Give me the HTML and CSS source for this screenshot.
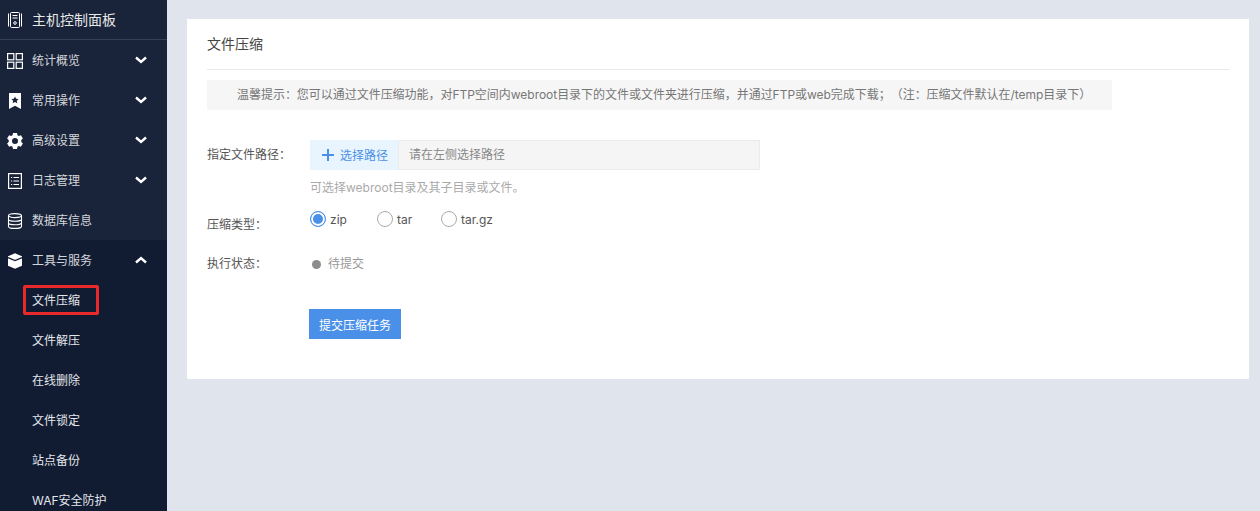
FILE: index.html
```html
<!DOCTYPE html>
<html lang="zh-CN">
<head>
<meta charset="utf-8">
<title>文件压缩</title>
<link rel="stylesheet" href="styles.css">
</head>
<body>
<div class="app">
  <aside class="sidebar">
    <div class="brand">
      <svg class="ico" viewBox="0 0 16 18" width="16" height="18" fill="none" stroke="#fff" stroke-width="1"><rect x="3.500" y="1.500" width="9" height="15" rx="1"/><path d="M1.500 2.500v13M14.500 2.500v13M5.500 4.500h5M5.500 7h5"/><circle cx="8" cy="12" r="1.300"/></svg>
      <span class="label">主机控制面板</span>
    </div>
    <nav>
      <a class="item">
        <svg class="ico" viewBox="0 0 16 16" width="16" height="16" fill="none" stroke="#fff" stroke-width="1.200"><rect x=".6" y=".6" width="6.200" height="6.200"/><rect x="9.200" y=".6" width="6.200" height="6.200"/><rect x=".6" y="9.200" width="6.200" height="6.200"/><rect x="9.200" y="9.200" width="6.200" height="6.200"/></svg>
        <span class="label">统计概览</span>
        <svg class="chev" viewBox="0 0 12 8" width="12" height="8" fill="none" stroke="#fff" stroke-width="2.400"><path d="M1 1.500l5 4.500 5-4.500"/></svg>
      </a>
      <a class="item">
        <svg class="ico" viewBox="0 0 16 16" width="16" height="16"><path fill="#fff" fill-rule="evenodd" d="M2 0h12v16l-6-3.200L2 16zM8 3.400l-1.100 2.300-2.500.3 1.800 1.700-.5 2.500L8 9l2.300 1.200-.5-2.500L11.600 6l-2.500-.3z"/></svg>
        <span class="label">常用操作</span>
        <svg class="chev" viewBox="0 0 12 8" width="12" height="8" fill="none" stroke="#fff" stroke-width="2.400"><path d="M1 1.500l5 4.500 5-4.500"/></svg>
      </a>
      <a class="item">
        <svg class="ico" viewBox="0 0 16 16" width="16" height="16"><path fill="#fff" fill-rule="evenodd" d="M6 0h4l.5 2.200 1.300.7 2.100-.7 2 3.400-1.600 1.500v1.800l1.600 1.500-2 3.400-2.100-.7-1.300.7L10 16H6l-.5-2.200-1.300-.7-2.100.7-2-3.400 1.600-1.500V7.100L.1 5.600l2-3.400 2.100.7 1.300-.7zM8 5a3 3 0 1 0 0 6 3 3 0 0 0 0-6z"/></svg>
        <span class="label">高级设置</span>
        <svg class="chev" viewBox="0 0 12 8" width="12" height="8" fill="none" stroke="#fff" stroke-width="2.400"><path d="M1 1.500l5 4.500 5-4.500"/></svg>
      </a>
      <a class="item">
        <svg class="ico" viewBox="0 0 16 16" width="16" height="16" fill="none" stroke="#fff" stroke-width="1.200"><rect x="1.600" y=".6" width="12.800" height="14.800"/><path d="M4 4.500h1.200M6.500 4.500H12M4 8h1.200M6.500 8H12M4 11.500h1.200M6.500 11.500H12" stroke-width="1"/></svg>
        <span class="label">日志管理</span>
        <svg class="chev" viewBox="0 0 12 8" width="12" height="8" fill="none" stroke="#fff" stroke-width="2.400"><path d="M1 1.500l5 4.500 5-4.500"/></svg>
      </a>
      <a class="item">
        <svg class="ico" viewBox="0 0 16 16" width="16" height="16" fill="none" stroke="#fff" stroke-width="1.100"><ellipse cx="8" cy="2.600" rx="6.500" ry="2"/><path d="M1.500 2.600v10.800c0 1.100 2.900 2 6.500 2s6.500-.9 6.500-2V2.600M1.500 6.200c0 1.100 2.900 2 6.500 2s6.500-.9 6.500-2M1.500 9.800c0 1.100 2.900 2 6.500 2s6.500-.9 6.500-2"/></svg>
        <span class="label">数据库信息</span>
      </a>
      <div class="group">
        <a class="item">
          <svg class="ico" viewBox="0 0 16 16" width="16" height="16"><path fill="#fff" d="M8 .3l7 3v9.400l-7 3-7-3V3.300z"/><path fill="none" stroke="#111c33" stroke-width="1.200" d="M1 4.600l7 3 7-3"/></svg>
          <span class="label">工具与服务</span>
          <svg class="chev" viewBox="0 0 12 8" width="12" height="8" fill="none" stroke="#fff" stroke-width="2.400"><path d="M1 6.500l5-4.500 5 4.500"/></svg>
        </a>
        <a class="sub"><span class="mark">文件压缩</span></a>
        <a class="sub"><span>文件解压</span></a>
        <a class="sub"><span>在线删除</span></a>
        <a class="sub"><span>文件锁定</span></a>
        <a class="sub"><span>站点备份</span></a>
        <a class="sub"><span>WAF安全防护</span></a>
      </div>
    </nav>
  </aside>
  <main class="main">
    <section class="card">
      <h1 class="title">文件压缩</h1>
      <p class="notice">温馨提示：您可以通过文件压缩功能，对FTP空间内webroot目录下的文件或文件夹进行压缩，并通过FTP或web完成下载；（注：压缩文件默认在/temp目录下）</p>
      <div class="row row-path">
        <div class="key">指定文件路径：</div>
        <div class="val">
          <div class="picker">
            <button class="pick" type="button">
              <svg viewBox="0 0 12 12" width="12" height="12"><path fill="#4a90e8" d="M5 0h2v5h5v2H7v5H5V7H0V5h5z"/></svg>
              <span class="pick-text">选择路径</span>
            </button>
            <div class="path">请在左侧选择路径</div>
          </div>
          <p class="hint">可选择webroot目录及其子目录或文件。</p>
        </div>
      </div>
      <div class="row row-type">
        <div class="key">压缩类型：</div>
        <div class="radios">
          <span class="radio on"><i></i>zip</span>
          <span class="radio"><i></i>tar</span>
          <span class="radio"><i></i>tar.gz</span>
        </div>
      </div>
      <div class="row row-status">
        <div class="key">执行状态：</div>
        <div class="status"><i></i>待提交</div>
      </div>
      <button class="submit" type="button">提交压缩任务</button>
    </section>
  </main>
</div>
</body>
</html>
```
FILE: styles.css
```css
* { box-sizing: border-box; }
html, body { margin: 0; height: 100%; overflow: hidden; }
body {
  font-family: Inter, "Noto Sans CJK SC", sans-serif;
  font-size: 12px;
  color: #555;
  background: #e0e4ed;
  text-spacing-trim: space-all;
}
.app { display: flex; height: 511px; overflow: hidden; }
.sidebar { width: 167px; flex: none; background: #19233a; color: #fff; overflow: hidden; }
.brand {
  height: 40px;
  display: flex;
  align-items: center;
  padding-left: 7px;
  font-size: 14px;
  color: #e8e8e8;
  border-bottom: 1px solid #343e56;
}
.ico { flex: none; margin-top: 2px; }
.brand .ico { margin-top: 0; }
.item {
  height: 40px;
  display: flex;
  align-items: center;
  padding-left: 7px;
  color: #d4d6db;
}
.label { margin-left: 9px; flex: 1; padding-bottom: 2px; }
.chev { margin-right: 20px; margin-top: -1px; }
.group { background: #111c33; }
.sub {
  height: 40px;
  display: flex;
  align-items: center;
  padding-left: 32px;
  padding-bottom: 2px;
  color: #e4e6ea;
}
.mark {
  width: 76px;
  height: 30px;
  margin: 2px 0 0 -9px;
  padding-left: 6px;
  line-height: 25px;
  border: 3px solid #ea2a2a;
  border-radius: 2px;
}
.main { flex: 1; padding: 19px 11px 0 20px; }
.card { height: 360px; background: #fff; padding: 0 20px; }
.title {
  margin: 0;
  height: 51px;
  line-height: 50px;
  font-size: 14px;
  font-weight: 400;
  color: #444;
  border-bottom: 1px solid #e8e8e8;
}
.notice {
  margin: 10px 0 0;
  width: 905px;
  height: 30px;
  line-height: 30px;
  padding-left: 30px;
  background: #f6f6f6;
  color: #777;
  letter-spacing: -0.03px;
  white-space: nowrap;
}
.row { display: flex; }
.key { width: 102px; flex: none; color: #555; }
.row-path { margin-top: 30px; }
.row-path .key { line-height: 30px; }
.picker { display: flex; width: 450px; height: 30px; margin-left: 1px; }
.pick {
  flex: none;
  width: 88px;
  height: 30px;
  border: 0;
  padding: 0 0 0 12px;
  background: #e8f4fe;
  color: #4a90e8;
  font: inherit;
  display: flex;
  align-items: center;
  gap: 6px;
}
.pick-text { padding-bottom: 2px; }
.path {
  flex: 1;
  line-height: 28px;
  padding-left: 10px;
  background: #f5f5f5;
  border: 1px solid #ebebeb;
  color: #888;
}
.hint { margin: 9px 0 0 1px; line-height: 18px; color: #aaa; }
.row-type { margin-top: 14px; height: 34px; }
.row-type .key { line-height: 18px; padding-top: 5px; }
.radios { display: grid; grid-template-columns: 67px 64px auto; margin: -1px 0 0 1px; align-self: flex-start; }
.radio { display: flex; align-items: center; height: 18px; color: #555; }
.radio i {
  width: 16px;
  height: 16px;
  margin-right: 4px;
  border: 1px solid #aaa;
  border-radius: 50%;
  background: #fff;
}
.radio.on i { border-color: #4a90e8; box-shadow: inset 0 0 0 2px #fff; background: #4a90e8; }
.row-status { margin-top: 10px; line-height: 18px; }
.status { display: flex; align-items: center; color: #999; margin-left: 3px; }
.status i { width: 9px; height: 9px; border-radius: 50%; background: #8c8c8c; margin-right: 7px; }
.submit {
  display: block;
  margin: 36px 0 0 102px;
  width: 92px;
  height: 30px;
  border: 0;
  padding: 0;
  background: #4a90e8;
  color: #fff;
  font: inherit;
}
```
